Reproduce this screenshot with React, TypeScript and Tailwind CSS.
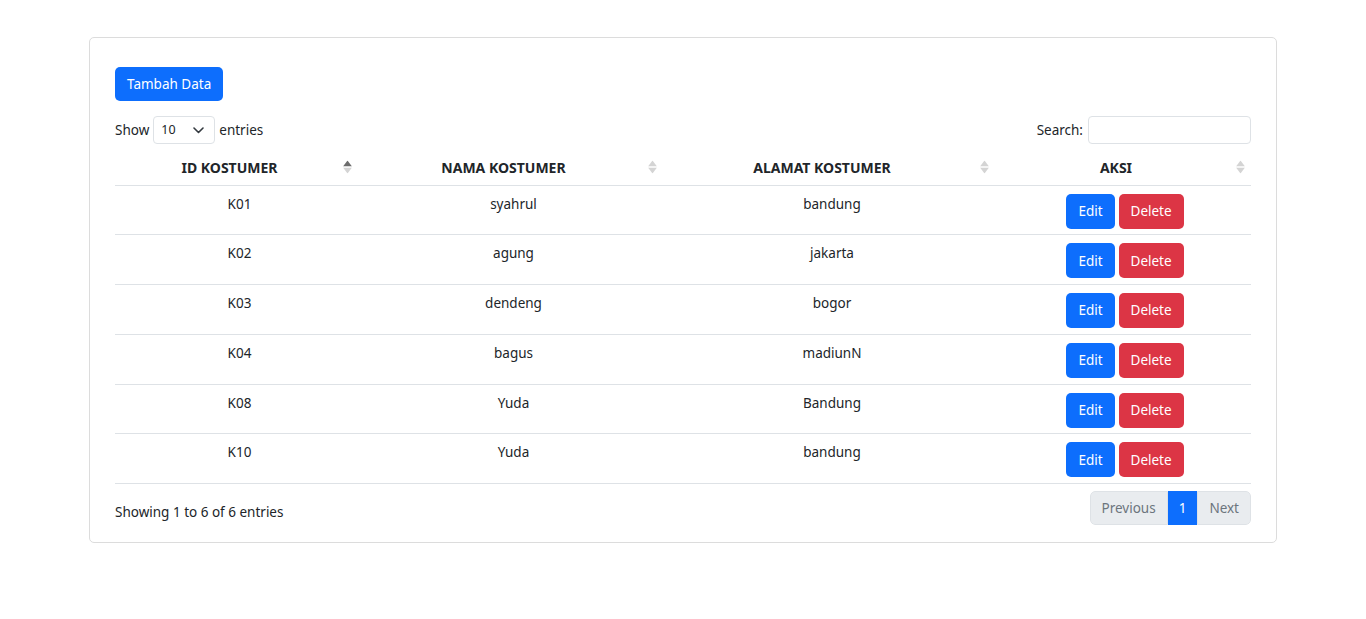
import React from "react";

const rows = [
  ["K01", "syahrul", "bandung"],
  ["K02", "agung", "jakarta"],
  ["K03", "dendeng", "bogor"],
  ["K04", "bagus", "madiunN"],
  ["K08", "Yuda", "Bandung"],
  ["K10", "Yuda", "bandung"],
];

function SortIcon({ active }: { active?: boolean }) {
  return (
    <span className="absolute right-[6px] top-1/2 -translate-y-1/2 flex flex-col items-center leading-none">
      <svg width="9" height="6" viewBox="0 0 9 6" className="mb-[1px]">
        <polygon points="4.5,0 9,6 0,6" fill={active ? "#6c6c6c" : "#d4d4d4"} />
      </svg>
      <svg width="9" height="6" viewBox="0 0 9 6">
        <polygon points="0,0 9,0 4.5,6" fill="#d4d4d4" />
      </svg>
    </span>
  );
}

export default function App() {
  const heads = ["ID KOSTUMER", "NAMA KOSTUMER", "ALAMAT KOSTUMER", "AKSI"];
  return (
    <div
      className="min-h-[619px] bg-white text-[13.5px] text-[#212529]"
      style={{ fontFamily: "'Noto Sans', 'Open Sans', sans-serif" }}
    >
      <div className="pt-[37px]">
        <div className="mx-auto w-[1188px] rounded-[5px] border border-[#dcdcdc] px-[25px] pt-[29px] pb-[17px]">
          <button className="h-[34px] rounded-[5px] bg-[#0d6efd] px-[12px] text-[13.5px] text-white">
            Tambah Data
          </button>
          <div className="mt-[15px] flex items-center justify-between">
            <div className="flex items-center">
              <span>Show</span>
              <div className="mx-[4px] flex h-[28px] w-[62px] items-center justify-between rounded-[4px] border border-[#dee2e6] pl-[7px] pr-[10px] text-[12.5px]">
                <span>10</span>
                <svg width="11" height="7" viewBox="0 0 11 7">
                  <path d="M1 1l4.5 4.5L10 1" fill="none" stroke="#343a40" strokeWidth="1.6" strokeLinecap="round" strokeLinejoin="round" />
                </svg>
              </div>
              <span>entries</span>
            </div>
            <div className="flex items-center">
              <span className="mr-[5px]">Search:</span>
              <div className="h-[28px] w-[163px] rounded-[4px] border border-[#dee2e6]" />
            </div>
          </div>
          <table className="mt-[6px] w-[1136px] table-fixed border-collapse">
            <colgroup>
              <col className="w-[243px]" />
              <col className="w-[305px]" />
              <col className="w-[332px]" />
              <col className="w-[256px]" />
            </colgroup>
            <thead>
              <tr className="border-b border-[#dee2e6]">
                {heads.map((h, i) => (
                  <th
                    key={h}
                    className="relative h-[35px] pl-[8px] pr-[22px] text-center align-middle font-bold text-[14px] text-[#212529]"
                  >
                    {h}
                    <SortIcon active={i === 0} />
                  </th>
                ))}
              </tr>
            </thead>
            <tbody>
              {rows.map((r) => (
                <tr key={r[0]} className="border-b border-[#dee2e6]">
                  {r.map((c, i) => (
                    <td key={i} className="pl-[14px] pr-[8px] pt-[8px] pb-[5.8px] text-center align-top leading-[21px]">
                      {c}
                    </td>
                  ))}
                  <td className="px-[8px] pt-[8px] pb-[5.8px] align-top">
                    <div className="flex justify-center gap-[4px] pl-[4px]">
                      <button className="h-[35px] rounded-[5px] bg-[#0d6efd] px-[12px] text-white">Edit</button>
                      <button className="h-[35px] rounded-[5px] bg-[#dc3545] px-[12px] text-white">Delete</button>
                    </div>
                  </td>
                </tr>
              ))}
            </tbody>
          </table>
          <div className="mt-[7px] flex items-center justify-between">
            <span className="mt-[8px]">Showing 1 to 6 of 6 entries</span>
            <div className="flex h-[34px] overflow-hidden rounded-[5px]">
              <span className="flex items-center rounded-l-[5px] border border-[#dee2e6] bg-[#e9ecef] px-[11px] text-[#6c757d]">Previous</span>
              <span className="flex items-center bg-[#0d6efd] px-[11px] text-white">1</span>
              <span className="flex items-center rounded-r-[5px] border border-[#dee2e6] bg-[#e9ecef] px-[11px] text-[#6c757d]">Next</span>
            </div>
          </div>
        </div>
      </div>
    </div>
  );
}
